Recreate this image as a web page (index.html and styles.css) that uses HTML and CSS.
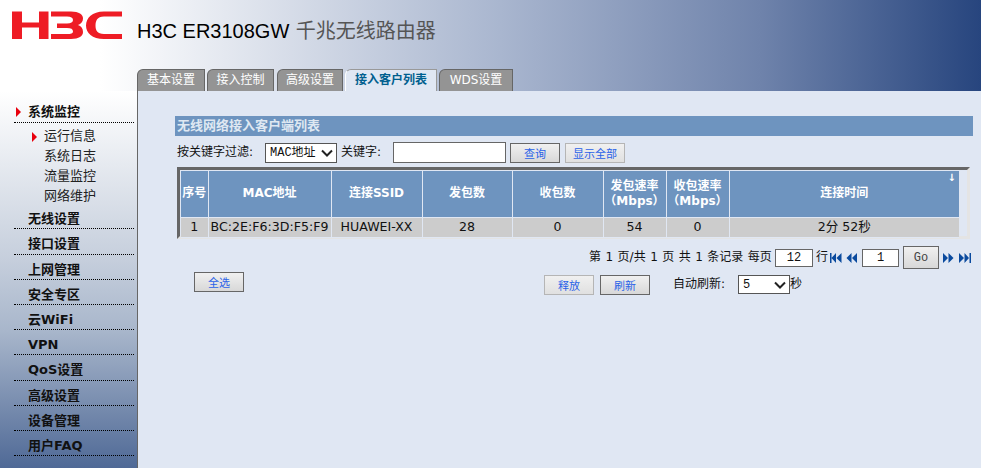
FILE: index.html
```html
<!DOCTYPE html>
<html lang="zh">
<head>
<meta charset="utf-8">
<title>H3C ER3108GW</title>
<link rel="stylesheet" href="styles.css">
</head>
<body>
<header class="header">
  <div class="brand">
    <svg class="logo" viewBox="12 11 110 28" width="110" height="28" aria-label="H3C">
      <path fill="#ee1c25" d="M12 11.5H22V22.5H39V11.5H48.5V39H39V27.5H22V39H12Z"/>
      <path fill="#ee1c25" d="M51 11.5H71C79 11.5 83 14.5 83 18.5C83 21.5 81 24 78 25C81 26 83 28.5 83 32C83 36 79 39 71 39H51V34H67C71 34 73 33.5 73 31.5C73 29 71 28 67 28H57V23.5H67C71 23.5 73 22 73 20C73 18 71 16.5 67 16.5H51Z"/>
      <path fill="#ee1c25" d="M122 11.5V16.5H104C97 16.5 95.5 21 95.5 25.5C95.5 30 97 34 104 34H122V39H104C92 39 86 33 86 25.5C86 18 92 11.5 104 11.5Z"/>
    </svg>
    <h1 class="title">H3C ER3108GW <span class="title-cn">千兆无线路由器</span></h1>
  </div>
  <nav class="tabs">
    <a class="tab tab-1">基本设置</a>
    <a class="tab tab-2">接入控制</a>
    <a class="tab tab-3">高级设置</a>
    <a class="tab tab-4 active">接入客户列表</a>
    <a class="tab tab-5">WDS设置</a>
  </nav>
</header>
<div class="body">
  <aside class="sidebar">
    <div class="menu-item open"><i class="arrow"></i>系统监控</div>
    <ul class="submenu">
      <li class="current"><i class="arrow"></i>运行信息</li>
      <li>系统日志</li>
      <li>流量监控</li>
      <li>网络维护</li>
    </ul>
    <div class="menu-item">无线设置</div>
    <div class="menu-item">接口设置</div>
    <div class="menu-item">上网管理</div>
    <div class="menu-item">安全专区</div>
    <div class="menu-item">云WiFi</div>
    <div class="menu-item">VPN</div>
    <div class="menu-item">QoS设置</div>
    <div class="menu-item">高级设置</div>
    <div class="menu-item">设备管理</div>
    <div class="menu-item">用户FAQ</div>
  </aside>
  <main class="main">
    <h2 class="section-title">无线网络接入客户端列表</h2>
    <div class="filter">
      <span class="filter-label">按关键字过滤:</span>
      <select class="sel sel-key"><option>MAC地址</option></select>
      <span class="filter-kw">关键字:</span>
      <input class="inp inp-kw" type="text">
      <button class="btn btn-query">查询</button>
      <button class="btn btn-all dis">显示全部</button>
    </div>
    <div class="table-box">
      <table class="list">
        <colgroup>
          <col class="c1"><col class="c2"><col class="c3"><col class="c4"><col class="c5"><col class="c6"><col class="c7"><col class="c8">
        </colgroup>
        <thead>
          <tr><th>序号</th><th>MAC地址</th><th>连接SSID</th><th>发包数</th><th>收包数</th><th>发包速率<br>（Mbps）</th><th>收包速率<br>（Mbps）</th><th class="sorted">连接时间<span class="sort">↓</span></th></tr>
        </thead>
        <tbody>
          <tr><td>1</td><td>BC:2E:F6:3D:F5:F9</td><td>HUAWEI-XX</td><td>28</td><td>0</td><td>54</td><td>0</td><td>2分 52秒</td></tr>
        </tbody>
      </table>
    </div>
    <div class="pager">
      <span class="pager-text">第 1 页/共 1 页 共 1 条记录 每页</span>
      <input class="inp inp-size" type="text" value="12">
      <span class="pager-row">行</span>
      <svg class="pi pi-first" width="12" height="10" viewBox="0 0 12 10"><path d="M0 0H1.5V10H0ZM6 0V10L1.5 5ZM11.5 0V10L6.5 5Z"/></svg>
      <svg class="pi pi-prev" width="11" height="10" viewBox="0 0 11 10"><path d="M5.5 0V10L.5 5ZM11 0V10L6 5Z"/></svg>
      <input class="inp inp-page" type="text" value="1">
      <button class="btn btn-go">Go</button>
      <svg class="pi pi-next" width="11" height="10" viewBox="0 0 11 10"><path d="M0 0V10L5 5ZM5.5 0V10L10.5 5Z"/></svg>
      <svg class="pi pi-last" width="12" height="10" viewBox="0 0 12 10"><path d="M0 0V10L5 5ZM5.5 0V10L10 5ZM10.5 0H12V10H10.5Z"/></svg>
    </div>
    <div class="actions">
      <button class="btn btn-selall">全选</button>
      <button class="btn btn-release dis">释放</button>
      <button class="btn btn-refresh">刷新</button>
      <span class="auto-label">自动刷新:</span>
      <select class="sel sel-auto"><option>5</option></select>
      <span>秒</span>
    </div>
  </main>
</div>
</body>
</html>
```
FILE: styles.css
```css
* { box-sizing: border-box; }
html, body { margin: 0; height: 468px; overflow: hidden; }
body {
  font: 12px/1.2 "DejaVu Sans", "Noto Sans CJK SC", sans-serif;
  color: #111;
  background: #e0e7f3;
  display: flex;
  flex-direction: column;
}
.header {
  height: 91px;
  flex: none;
  background: linear-gradient(90deg, #fff 0, #fff 100px, #a9b6cf 500px, #6f83ab 760px, #27457e 981px);
}
.brand { display: flex; height: 69px; padding: 11px 0 0 12px; }
.logo { flex: none; display: block; }
.title {
  margin: 7px 0 0 15px;
  font: 400 20px/26px "Liberation Sans", "Noto Sans CJK SC", sans-serif;
  color: #000;
  white-space: nowrap;
}
.title-cn { color: #555; margin-left: 1px; }
.tabs { display: flex; height: 22px; padding-left: 137px; }
.tab {
  display: flex;
  align-items: center;
  justify-content: center;
  height: 22px;
  margin-right: 2px;
  background: #949494;
  color: #fff;
  border-top: 1px solid #666;
  border-left: 1px solid #666;
  border-right: 1px solid #666;
  border-top-left-radius: 6px;
  font-size: 12px;
}
.tab-1 { width: 68px; }
.tab-2 { width: 67px; }
.tab-3 { width: 66px; margin-left: 1px; }
.tab-4 { width: 92px; }
.tab-5 { width: 74px; }
.tab.active { background: #e0e7f3; color: #005f8f; font-weight: 700; border-top-color: #999; border-left-color: #fff; border-right-color: #999; }

.body { display: flex; flex: 1; min-height: 0; }
.sidebar {
  width: 138px;
  flex: none;
  padding: 7px 3px 0 14px;
  border-right: 1px solid #666;
  background: linear-gradient(180deg, #fff 0, #c5cedc 170px, #a8b6cb 240px, #4f6996 377px);
}
.menu-item {
  position: relative;
  height: 25.2px;
  padding-left: 14px;
  border-bottom: 1px dotted #000;
  font-weight: 700;
  font-size: 13px;
  line-height: 30px;
  color: #111;
}
.menu-item.open { line-height: 28px; }
.arrow {
  position: absolute;
  left: 2px;
  top: 9px;
  width: 0;
  height: 0;
  border-left: 5px solid #e8000d;
  border-top: 5px solid transparent;
  border-bottom: 5px solid transparent;
}
.submenu { list-style: none; margin: 3px 0 -2px; padding: 0 0 0 30px; }
.submenu li { position: relative; height: 20px; line-height: 20px; font-size: 13px; color: #222; }
.submenu .arrow { left: -12px; top: 6px; }

.main { flex: 1; min-width: 0; padding: 25px 8px 0 37px; }
.section-title {
  margin: 0;
  height: 20px;
  padding-left: 2px;
  background: #6e94bf;
  color: #dfe8f2;
  font-size: 13px;
  line-height: 20px;
  font-weight: 700;
}
.filter { display: flex; align-items: center; height: 21px; padding-left: 2px; margin: 6px 0 4px; }
.filter-label { width: 88px; }
.filter-kw { margin-left: 4px; width: 52px; }
.sel {
  height: 20px;
  border: 1px solid #555;
  background: #fff url("data:image/svg+xml,%3Csvg xmlns='http://www.w3.org/2000/svg' width='12' height='8'%3E%3Cpath d='M1 1.5L6 6.5L11 1.5' fill='none' stroke='%23222' stroke-width='2'/%3E%3C/svg%3E") no-repeat right 3px center;
  appearance: none;
  font: 12px "Liberation Mono", "Noto Sans CJK SC", monospace;
  color: #111;
  padding: 0 0 0 4px;
  border-radius: 0;
}
.sel-key { width: 72px; }
.sel-auto { width: 52px; height: 19px; margin-top: 3px; }
.inp {
  border: 1px solid #666;
  background: #fff;
  height: 18px;
  padding: 0;
  text-align: center;
  font: 12px "Liberation Mono", monospace;
  color: #111;
  outline: 0;
}
.inp-kw { width: 113px; height: 21px; }
.btn {
  height: 20px;
  width: 50px;
  padding: 0;
  border: 1px solid #666;
  background: linear-gradient(180deg, #f0f0f0, #d8d8d8);
  color: #2a62e8;
  font: 11px "DejaVu Sans", "Noto Sans CJK SC", sans-serif;
}
.dis { border-color: #b5b5b5; background: linear-gradient(180deg, #f0f0f0, #e0e0e0); }
.btn-query { margin-left: 4px; }
.btn-all { margin-left: 5px; width: 60px; }
.table-box {
  margin-left: 2px;
  width: 793px;
  height: 72px;
  padding: 1px 11px 0 1px;
  border: 3px solid #e4e4e4;
  border-top-color: #666;
  border-left-color: #666;
}
.list { width: 778px; table-layout: fixed; border-collapse: collapse; }
.c1 { width: 27px; } .c2 { width: 123px; } .c3 { width: 91px; } .c4 { width: 90px; }
.c5 { width: 91px; } .c6 { width: 63px; } .c7 { width: 63px; } .c8 { width: 230px; }
.list th, .list td { padding: 0; border: 1px solid #e0e7f3; text-align: center; overflow: hidden; white-space: nowrap; }
.list tr:first-child th { border-top: 0; }
.list th:first-child, .list td:first-child { border-left: 0; }
.list th:last-child, .list td:last-child { border-right: 0; }
.list th { height: 46px; background: #6e94bf; color: #fff; font-size: 12px; font-weight: 700; line-height: 15px; }
.list td { height: 20px; background: #ccc; color: #111; font-size: 12.6px; }
.sorted { position: relative; }
.sort { position: absolute; right: 3px; top: 1px; font-size: 10px; line-height: 12px; font-weight: 700; }
.pager { display: flex; align-items: center; height: 23px; margin-top: 7px; padding-left: 414px; white-space: nowrap; }
.pager-text { width: 182px; word-spacing: .67px; }
.inp-size { width: 38px; margin-left: 4px; }
.pager-row { margin-left: 3px; }
.pi { fill: #0a4a9e; flex: none; }
.pi-first { margin-left: 2px; }
.pi-prev { margin-left: 4px; }
.inp-page { width: 37px; margin-left: 5px; }
.btn-go { width: 36px; height: 23px; margin-left: 4px; color: #444; font: 12px "Liberation Mono", monospace; }
.pi-next { margin-left: 4px; }
.pi-last { margin-left: 5px; }
.actions { display: flex; align-items: flex-start; margin-top: 3px; padding-left: 19px; }
.actions span { line-height: 19px; margin-top: 3px; }
.btn-release { margin: 3px 0 0 300px; }
.btn-refresh { margin: 3px 0 0 6px; }
.auto-label { margin-left: 23px; width: 65px; }
```
